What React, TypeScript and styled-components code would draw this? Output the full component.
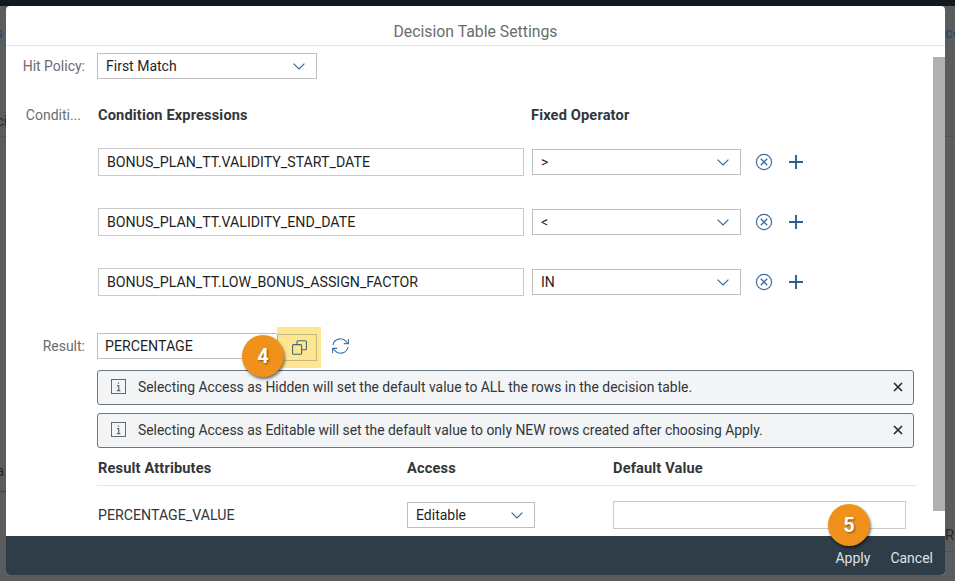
import styled, { createGlobalStyle } from "styled-components";

const GlobalStyle = createGlobalStyle`
    html, body {
        margin: 0;
        padding: 0;
        background: #5b5c5d;
    }

    * {
        box-sizing: border-box;
    }
`;

const UI_FONT = `Roboto, "Liberation Sans", sans-serif`;

const Page = styled.div`
    background: #5b5c5d;
    font-family: ${UI_FONT};
    height: 581px;
    overflow: hidden;
    padding-top: 6px;
    position: relative;
    width: 955px;

    &::before {
        background: #12181d;
        content: "";
        height: 6px;
        left: 0;
        position: absolute;
        right: 0;
        top: 0;
    }
`;

const BackdropText = styled.span<{ $x: number; $y: number; $color?: string }>`
    color: ${(p) => p.$color ?? "#26282a"};
    font-size: 15px;
    left: ${(p) => p.$x}px;
    line-height: 18px;
    position: absolute;
    top: ${(p) => p.$y}px;
`;

const BackdropRule = styled.i<{ $x: number; $y: number; $color: string }>`
    background: ${(p) => p.$color};
    height: 1px;
    left: ${(p) => p.$x}px;
    position: absolute;
    top: ${(p) => p.$y}px;
    width: 10px;
`;

const Dialog = styled.section`
    background: #fff;
    border-radius: 4px;
    display: flex;
    flex-direction: column;
    height: 569px;
    margin-left: 6px;
    overflow: hidden;
    position: relative;
    width: 939px;
`;

const DialogHeader = styled.header`
    align-items: center;
    border-bottom: 1px solid #e5e5e5;
    color: #6a6d70;
    display: flex;
    flex: none;
    font-size: 15.8px;
    height: 40px;
    justify-content: center;
    padding-top: 12px;
`;

const DialogBody = styled.div`
    flex: 1;
    min-height: 0;
    overflow: hidden;
    padding-top: 7px;
    position: relative;
`;

const ScrollThumb = styled.div`
    background: #b0b0b0;
    height: 454px;
    position: absolute;
    right: 0;
    top: 11px;
    width: 12px;
`;

const FieldRow = styled.div<{ $top?: number }>`
    align-items: center;
    display: grid;
    gap: 12px;
    grid-template-columns: 79px 1fr;
    margin-top: ${(p) => p.$top ?? 0}px;
`;

const FieldLabel = styled.label<{ $inset?: number }>`
    color: #6a6d70;
    font-size: 14px;
    padding-right: ${(p) => p.$inset ?? 0}px;
    text-align: right;
`;

const SelectBox = styled.div<{ $width: number }>`
    align-items: center;
    background: #fff;
    border: 1px solid #bfbfbf;
    color: #1f1f1f;
    display: flex;
    font-size: 14px;
    height: 26px;
    justify-content: space-between;
    padding: 0 11px 0 8px;
    width: ${(p) => p.$width}px;
`;

const ConditionHead = styled.div`
    color: #32363a;
    display: grid;
    font-size: 14.6px;
    font-weight: 700;
    grid-template-columns: 433px 1fr;
    letter-spacing: 0.15px;
    line-height: 20px;
    padding-left: 1px;
`;

const ConditionRow = styled.div<{ $top: number }>`
    align-items: center;
    display: flex;
    margin-left: 92px;
    margin-top: ${(p) => p.$top}px;
`;

const TextBox = styled.div`
    align-items: center;
    border: 1px solid #c9c9c9;
    color: #1f1f1f;
    display: flex;
    font-size: 14.2px;
    height: 28px;
    margin-right: 8px;
    padding-left: 8px;
    width: 426px;
`;

const RowActions = styled.div`
    align-items: center;
    display: flex;
    gap: 15px;
    margin-left: 14px;
`;

const ResultControls = styled.div`
    align-items: center;
    display: flex;
    gap: 14px;
`;

const ResultInput = styled.div`
    align-items: center;
    border: 1px solid #bfbfbf;
    color: #1f1f1f;
    display: flex;
    font-size: 14.2px;
    height: 26px;
    justify-content: space-between;
    padding-left: 7px;
    position: relative;
    width: 220px;
`;

const Highlight = styled.span`
    align-items: center;
    background: #fde592;
    display: flex;
    height: 41px;
    justify-content: center;
    position: absolute;
    right: -5px;
    top: -7px;
    width: 44px;

    &::after {
        border: 1px solid #c4b97f;
        bottom: 7px;
        content: "";
        left: 0;
        position: absolute;
        right: 4px;
        top: 7px;
    }
`;

const Messages = styled.div`
    display: flex;
    flex-direction: column;
    gap: 8px;
    margin: 11px 0 0 91px;
    width: 817px;
`;

const Message = styled.div`
    align-items: center;
    background: #f2f4f6;
    border: 1px solid #6a7883;
    border-radius: 3px;
    color: #32363a;
    display: flex;
    font-size: 13.9px;
    gap: 12px;
    height: 35px;
    padding: 0 10px 2px 13px;
`;

const MessageText = styled.span`
    flex: 1;
`;

const ResultTable = styled.div`
    margin: 10px 0 0 91px;
    width: 820px;
`;

const TableGrid = styled.div`
    align-items: center;
    display: grid;
    grid-template-columns: 309px 206px 293px;
    padding-left: 1px;
`;

const TableHead = styled(TableGrid)`
    border-bottom: 1px solid #e5e5e5;
    color: #32363a;
    font-size: 14.6px;
    font-weight: 700;
    height: 28px;
    letter-spacing: 0.15px;
    padding-bottom: 7px;
`;

const TableRow = styled(TableGrid)`
    color: #32363a;
    font-size: 14.2px;
    padding-top: 15px;
`;

const ValueBox = styled.div`
    border: 1px solid #c9c9c9;
    height: 28px;
`;

const DialogFooter = styled.footer`
    align-items: center;
    background: #2f3d49;
    color: #dbe3ea;
    display: flex;
    flex: none;
    font-size: 14px;
    gap: 20px;
    height: 39px;
    justify-content: flex-end;
    padding: 4px 12px 0 0;
`;

const Badge = styled.span<{ $x: number; $y: number }>`
    align-items: center;
    background: #ef911b;
    border-radius: 50%;
    box-shadow: 1px 2px 3px rgba(0, 0, 0, 0.55);
    color: #fff;
    display: flex;
    font-size: 20px;
    font-weight: 700;
    height: 42px;
    justify-content: center;
    left: ${(p) => p.$x - 21}px;
    position: absolute;
    text-shadow: 1px 1px 2px rgba(0, 0, 0, 0.45);
    top: ${(p) => p.$y - 21}px;
    width: 42px;
`;

const Chevron = () => (
    <svg width="12" height="7" viewBox="0 0 12 7" fill="none" stroke="#2f6497" strokeWidth="1.1">
        <path d="M.6.6L6 6l5.4-5.4" />
    </svg>
);

const RemoveIcon = () => (
    <svg width="18" height="18" viewBox="0 0 18 18" fill="none" stroke="#3c6f9e" strokeWidth="1.2">
        <circle cx="9" cy="9" r="7.6" />
        <path d="M5.8 5.8l6.4 6.4M12.2 5.8l-6.4 6.4" strokeWidth="1.4" />
    </svg>
);

const PlusIcon = () => (
    <svg width="16" height="16" viewBox="0 0 16 16" fill="none" stroke="#2b5f8f" strokeWidth="1.9">
        <path d="M8 1v14M1 8h14" />
    </svg>
);

const CopyIcon = () => (
    <svg width="15" height="15" viewBox="0 0 15 15" fill="none" stroke="#3f6a74" strokeWidth="1.1" style={{ position: "relative", zIndex: 1 }}>
        <rect x="0.6" y="4.6" width="9" height="9.6" rx="1" />
        <path d="M5 4.5V1.8a1 1 0 0 1 1-1h7.4a1 1 0 0 1 1 1v7a1 1 0 0 1-1 1H9.6" />
    </svg>
);

const RefreshIcon = () => (
    <svg width="19" height="18" viewBox="0 0 19 18" fill="none" stroke="#3c78ad" strokeWidth="1.1">
        <path d="M2 8a7.5 7 0 0 1 13.4-3.4L17 6.4" />
        <path d="M17.4 2v4.6h-4.6" />
        <path d="M17 10a7.5 7 0 0 1-13.4 3.4L2 11.6" />
        <path d="M1.6 16v-4.6h4.6" />
    </svg>
);

const InfoIcon = () => (
    <svg width="15" height="15" viewBox="0 0 15 15" fill="none" stroke="#5f6a72" strokeWidth="1">
        <rect x="0.5" y="0.5" width="14" height="14" />
        <path d="M7.5 3.4v1.4M6 6.6h1.7v5M5.8 11.6h3.6" strokeWidth="1.2" />
    </svg>
);

const CloseIcon = () => (
    <svg width="10" height="10" viewBox="0 0 10 10" fill="none" stroke="#2a2d30" strokeWidth="1.7">
        <path d="M1 1l8 8M9 1l-8 8" />
    </svg>
);

const conditions = [
    { expression: "BONUS_PLAN_TT.VALIDITY_START_DATE", operator: ">" },
    { expression: "BONUS_PLAN_TT.VALIDITY_END_DATE", operator: "<" },
    { expression: "BONUS_PLAN_TT.LOW_BONUS_ASSIGN_FACTOR", operator: "IN" },
];

const messages = [
    "Selecting Access as Hidden will set the default value to ALL the rows in the decision table.",
    "Selecting Access as Editable will set the default value to only NEW rows created after choosing Apply.",
];

function App() {
    return (
        <Page>
            <GlobalStyle />
            <BackdropText $x={-5} $y={24} $color="#174a73">s</BackdropText>
            <BackdropText $x={-4} $y={112}>ci</BackdropText>
            <BackdropText $x={-4} $y={462}>a</BackdropText>
            <BackdropText $x={945} $y={24} $color="#174a73">ce</BackdropText>
            <BackdropText $x={945} $y={526}>Ro</BackdropText>
            <BackdropRule $x={0} $y={136} $color="#4f5356" />
            <BackdropRule $x={945} $y={136} $color="#4f5356" />
            <BackdropRule $x={0} $y={491} $color="#3f4142" />
            <BackdropRule $x={945} $y={551} $color="#4f5356" />
            <Dialog>
                <DialogHeader>Decision Table Settings</DialogHeader>
                <DialogBody>
                    <FieldRow>
                        <FieldLabel>Hit Policy:</FieldLabel>
                        <SelectBox $width={220}>First Match <Chevron /></SelectBox>
                    </FieldRow>
                    <FieldRow $top={26}>
                        <FieldLabel $inset={4}>Conditi...</FieldLabel>
                        <ConditionHead>
                            <span>Condition Expressions</span>
                            <span>Fixed Operator</span>
                        </ConditionHead>
                    </FieldRow>
                    {conditions.map((condition, index) => (
                        <ConditionRow key={condition.expression} $top={index === 0 ? 23 : 32}>
                            <TextBox>{condition.expression}</TextBox>
                            <SelectBox $width={209}>{condition.operator} <Chevron /></SelectBox>
                            <RowActions>
                                <RemoveIcon />
                                <PlusIcon />
                            </RowActions>
                        </ConditionRow>
                    ))}
                    <FieldRow $top={37}>
                        <FieldLabel>Result:</FieldLabel>
                        <ResultControls>
                            <ResultInput>
                                PERCENTAGE
                                <Highlight><CopyIcon /></Highlight>
                            </ResultInput>
                            <RefreshIcon />
                        </ResultControls>
                    </FieldRow>
                    <Messages>
                        {messages.map((message) => (
                            <Message key={message}>
                                <InfoIcon />
                                <MessageText>{message}</MessageText>
                                <CloseIcon />
                            </Message>
                        ))}
                    </Messages>
                    <ResultTable>
                        <TableHead>
                            <span>Result Attributes</span>
                            <span>Access</span>
                            <span>Default Value</span>
                        </TableHead>
                        <TableRow>
                            <span>PERCENTAGE_VALUE</span>
                            <SelectBox $width={128}>Editable <Chevron /></SelectBox>
                            <ValueBox />
                        </TableRow>
                    </ResultTable>
                    <ScrollThumb />
                </DialogBody>
                <DialogFooter>
                    <span>Apply</span>
                    <span>Cancel</span>
                </DialogFooter>
                <Badge $x={257} $y={350}>4</Badge>
                <Badge $x={843} $y={519}>5</Badge>
            </Dialog>
        </Page>
    );
}

export default App;
